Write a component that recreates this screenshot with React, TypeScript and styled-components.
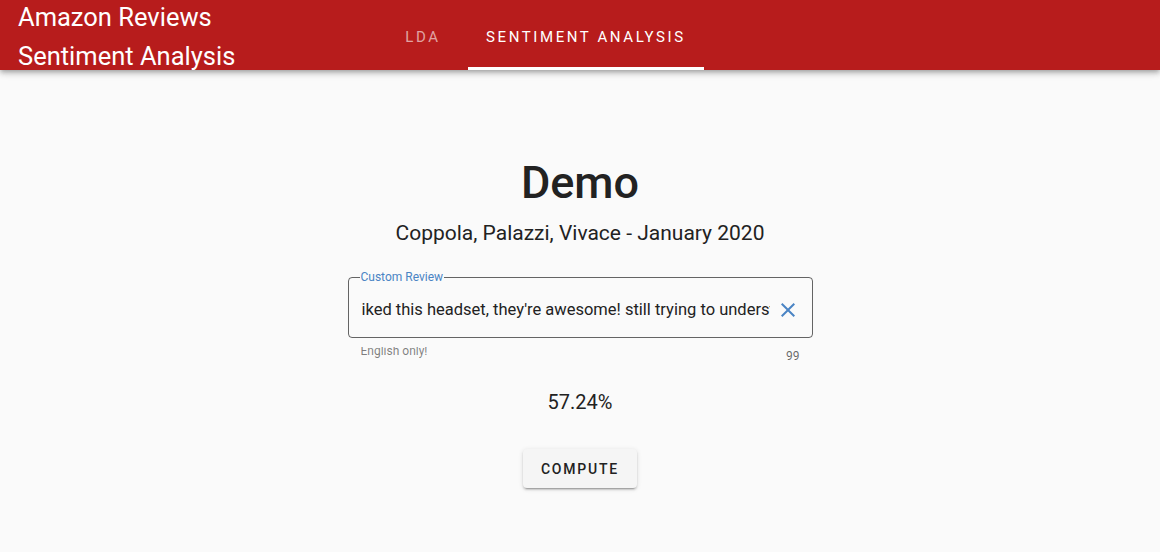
import React from 'react';
import styled, { createGlobalStyle } from 'styled-components';

const GlobalStyle = createGlobalStyle`
  html, body {
    margin: 0;
    padding: 0;
    background: #fafafa;
    font-family: Roboto, "Noto Sans", sans-serif;
    color: rgba(0, 0, 0, 0.87);
  }
`;

const App: React.FC = () => {
  return (
    <>
      <GlobalStyle />
      <Page>
        <AppBar>
          <Title>
            <span>Amazon Reviews</span>
            <span>Sentiment Analysis</span>
          </Title>
          <Tabs>
            <Tab>LDA</Tab>
            <Tab active>SENTIMENT ANALYSIS</Tab>
          </Tabs>
        </AppBar>
        <Main>
          <Heading>Demo</Heading>
          <Subtitle>Coppola, Palazzi, Vivace - January 2020</Subtitle>
          <Field>
            <Outline>
              <Legend>Custom Review</Legend>
              <InputRow>
                <Input
                  defaultValue="iked this headset, they're awesome! still trying to understand how to pair it"
                />
                <ClearButton aria-label="clear">
                  <svg width="24" height="24" viewBox="0 0 24 24">
                    <path
                      d="M19 6.41 17.59 5 12 10.59 6.41 5 5 6.41 10.59 12 5 17.59 6.41 19 12 13.41 17.59 19 19 17.59 13.41 12z"
                      fill="currentColor"
                    />
                  </svg>
                </ClearButton>
              </InputRow>
            </Outline>
            <Details>
              <Hint>English only!</Hint>
              <Counter>99</Counter>
            </Details>
          </Field>
          <Score>57.24%</Score>
          <Button>COMPUTE</Button>
        </Main>
      </Page>
    </>
  );
};

export default App;

const Page = styled.div`
  min-height: 552px;
  background: #fafafa;
`;

const AppBar = styled.header`
  display: flex;
  align-items: stretch;
  height: 70px;
  padding: 0 0 0 16px;
  background: #b71c1c;
  box-shadow: 0 2px 4px -1px rgba(0, 0, 0, 0.2), 0 4px 5px 0 rgba(0, 0, 0, 0.14),
    0 1px 10px 0 rgba(0, 0, 0, 0.12);
  position: relative;
  z-index: 1;
`;

const Title = styled.div`
  flex: 0 0 360px;
  display: flex;
  flex-direction: column;
  justify-content: center;
  padding: 4px 0 0 2px;
  color: #fff;
  font-size: 25.5px;
  line-height: 39px;
  white-space: nowrap;
`;

const Tabs = styled.nav`
  display: flex;
  align-items: stretch;
`;

const Tab = styled.div<{ active?: boolean }>`
  display: flex;
  align-items: center;
  justify-content: center;
  min-width: 90px;
  padding: 6px 18px 0;
  box-sizing: border-box;
  font-size: 15px;
  font-weight: 400;
  letter-spacing: 2.6px;
  color: ${p => (p.active ? '#fff' : 'rgba(255, 255, 255, 0.6)')};
  border-bottom: 3px solid ${p => (p.active ? '#fff' : 'transparent')};
`;

const Main = styled.main`
  display: flex;
  flex-direction: column;
  align-items: center;
  padding-top: 84px;
`;

const Heading = styled.h1`
  margin: 0;
  font-size: 45px;
  font-weight: 500;
  line-height: 58px;
  color: #222;
`;

const Subtitle = styled.div`
  margin-top: 5px;
  font-size: 21px;
  line-height: 32px;
  color: #222;
`;

const Field = styled.div`
  width: 465px;
  margin-top: 22px;
`;

const Outline = styled.fieldset`
  margin: 0;
  height: 67px;
  box-sizing: border-box;
  border: 1px solid rgba(0, 0, 0, 0.6);
  border-radius: 4px;
  padding: 0 12px 0 13px;
`;

const Legend = styled.legend`
  padding: 0 1px;
  margin-left: -2px;
  font-size: 12px;
  line-height: 12px;
  color: #4a84c4;
`;

const InputRow = styled.div`
  display: flex;
  align-items: center;
  height: 61px;
  margin-top: -4px;
`;

const Input = styled.input`
  flex: 1;
  min-width: 0;
  border: none;
  outline: none;
  background: transparent;
  font-family: inherit;
  font-size: 16.5px;
  color: #222;
  padding: 0;
`;

const ClearButton = styled.button`
  display: flex;
  border: none;
  background: none;
  padding: 0;
  margin-left: 6px;
  color: #4a84c4;
  cursor: pointer;
`;

const Details = styled.div`
  display: flex;
  justify-content: space-between;
  align-items: flex-start;
  margin-top: 9px;
  padding: 0 13px;
  height: 16px;
  overflow: hidden;
  font-size: 12px;
  color: rgba(0, 0, 0, 0.5);
`;

const Hint = styled.span`
  line-height: 12px;
  margin-top: -2px;
`;

const Counter = styled.span`
  line-height: 12px;
  margin-top: 3px;
  color: rgba(0, 0, 0, 0.6);
`;

const Score = styled.div`
  margin-top: 23px;
  font-size: 20px;
  line-height: 32px;
  color: #222;
`;

const Button = styled.button`
  margin-top: 31px;
  height: 39px;
  padding: 0 18px;
  border: none;
  border-radius: 4px;
  background: #f5f5f5;
  font-family: inherit;
  font-size: 14px;
  font-weight: 500;
  letter-spacing: 1.8px;
  color: #222;
  box-shadow: 0 3px 1px -2px rgba(0, 0, 0, 0.2), 0 2px 2px 0 rgba(0, 0, 0, 0.14),
    0 1px 5px 0 rgba(0, 0, 0, 0.12);
  cursor: pointer;
`;
